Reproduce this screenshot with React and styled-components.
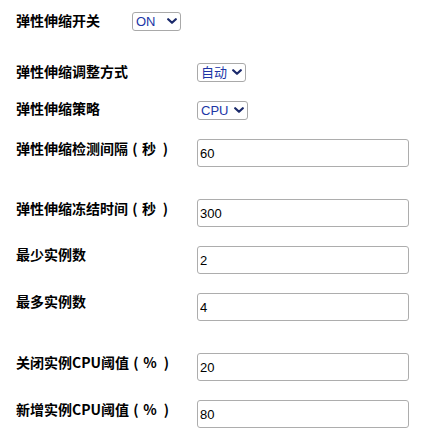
import React from "react";
import styled, { createGlobalStyle } from "styled-components";

const GlobalStyle = createGlobalStyle`
  html, body {
    margin: 0;
    padding: 0;
    background: #ffffff;
  }
  body {
    font-family: "Liberation Sans", Arial, sans-serif;
  }
`;

const Form = styled.div`
  display: flex;
  flex-direction: column;
  padding: 12px 0 0 16px;
  width: 421px;
  box-sizing: border-box;
`;

const Row = styled.div`
  display: flex;
  align-items: flex-start;
  height: ${(p) => p.$h}px;
  flex-shrink: 0;
`;

const Label = styled.div`
  width: ${(p) => p.$w}px;
  flex-shrink: 0;
  padding-top: ${(p) => p.$dy}px;
  font-family: "Noto Sans CJK SC", "Liberation Sans", sans-serif;
  font-weight: 700;
  font-size: 14px;
  line-height: 14px;
  color: #000;
  white-space: nowrap;
`;

const Paren = styled.span`
  display: inline-block;
  width: ${(p) => p.$w}px;
  text-align: ${(p) => p.$align};
`;

const Unit = styled.span`
  display: inline-block;
  width: 14px;
  text-align: center;
`;

const SelectWrap = styled.div`
  position: relative;
  display: inline-block;
  width: ${(p) => p.$w}px;
  height: 19px;
`;

const Select = styled.select`
  appearance: none;
  -webkit-appearance: none;
  width: 100%;
  height: 100%;
  box-sizing: border-box;
  margin: 0;
  padding: 0 0 0 3px;
  border: 1px solid #a9a9a9;
  border-radius: 3px;
  background: #fff;
  color: #2035a6;
  font-family: "Liberation Sans", "Noto Sans CJK SC", sans-serif;
  font-size: 13px;
  line-height: 17px;
  outline: none;
`;

const Chevron = styled.svg`
  position: absolute;
  right: 4px;
  top: 6px;
  width: 10px;
  height: 6px;
  pointer-events: none;
`;

const Input = styled.input`
  width: 212px;
  height: 28px;
  box-sizing: border-box;
  margin: 0;
  padding: 0 2px;
  border: 1px solid #adadad;
  border-radius: 3px;
  background: #fff;
  color: #000;
  font-family: "Liberation Sans", Arial, sans-serif;
  font-size: 13px;
  outline: none;
`;

const Drop = ({ w, value, options }) => (
  <SelectWrap $w={w}>
    <Select defaultValue={value}>
      {options.map((o) => (
        <option key={o} value={o}>
          {o}
        </option>
      ))}
    </Select>
    <Chevron viewBox="0 0 10 6">
      <path
        d="M1.2 1.2 L5 4.8 L8.8 1.2"
        fill="none"
        stroke="#1b2a6b"
        strokeWidth="2.2"
        strokeLinecap="round"
        strokeLinejoin="round"
      />
    </Chevron>
  </SelectWrap>
);

const LabelText = ({ text, unit }) => (
  <>
    {text}
    {unit && (
      <>
        <Paren $w={14} $align="center">(</Paren>
        <Unit>{unit}</Unit>
        <Paren $w={12} $align="right">)</Paren>
      </>
    )}
  </>
);

const inputRows = [
  { label: "弹性伸缩检测间隔", unit: "秒", value: "60", h: 60, dy: 2 },
  { label: "弹性伸缩冻结时间", unit: "秒", value: "300", h: 47, dy: 2 },
  { label: "最少实例数", value: "2", h: 47, dy: 1 },
  { label: "最多实例数", value: "4", h: 60, dy: 1 },
  { label: "关闭实例CPU阈值", unit: "%", value: "20", h: 47, dy: 2 },
  { label: "新增实例CPU阈值", unit: "%", value: "80", h: 28, dy: 2 },
];

export default function App() {
  return (
    <>
      <GlobalStyle />
      <Form>
        <Row $h={51}>
          <Label $w={116} $dy={1}>弹性伸缩开关</Label>
          <Drop w={49} value="ON" options={["ON", "OFF"]} />
        </Row>
        <Row $h={38}>
          <Label $w={181} $dy={1}>弹性伸缩调整方式</Label>
          <Drop w={49} value="自动" options={["自动", "手动"]} />
        </Row>
        <Row $h={38}>
          <Label $w={181} $dy={0}>弹性伸缩策略</Label>
          <Drop w={51} value="CPU" options={["CPU"]} />
        </Row>
        {inputRows.map((r) => (
          <Row key={r.label} $h={r.h}>
            <Label $w={181} $dy={r.dy}>
              <LabelText text={r.label} unit={r.unit} />
            </Label>
            <Input type="text" defaultValue={r.value} />
          </Row>
        ))}
      </Form>
    </>
  );
}
